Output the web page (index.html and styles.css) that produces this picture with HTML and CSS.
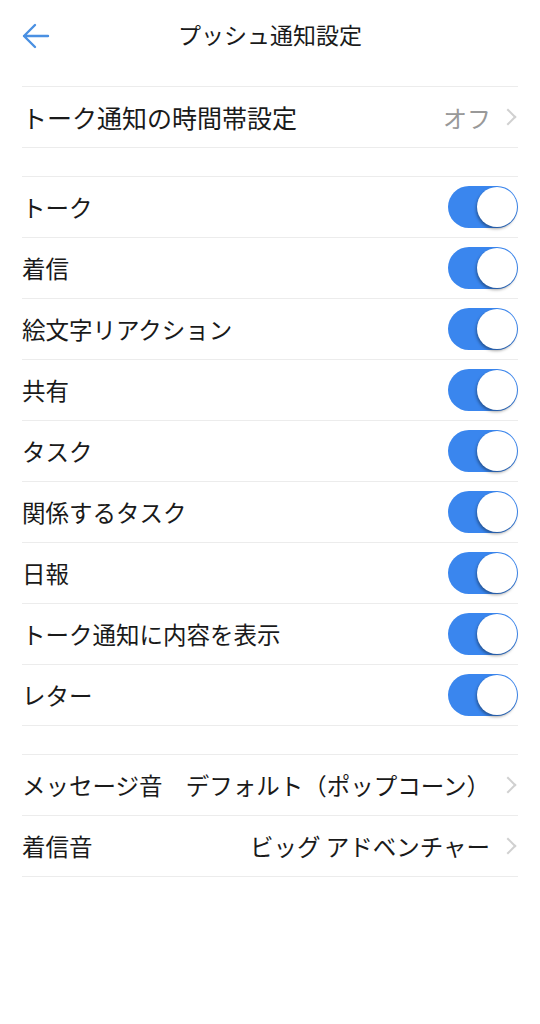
FILE: index.html
```html
<!DOCTYPE html>
<html lang="ja">
<head>
  <meta charset="utf-8">
  <meta name="viewport" content="width=device-width, initial-scale=1.0">
  <title>プッシュ通知設定</title>
  <link rel="stylesheet" href="styles.css">
</head>
<body>

  <header class="nav">
    <a class="back" href="#" aria-label="戻る">
      <svg width="28" height="26" viewBox="0 0 28 26" fill="none" stroke="#4a90e2" stroke-width="2.4" stroke-linecap="round" stroke-linejoin="round">
        <path d="M26 13H2M13 2L2 13L13 24"/>
      </svg>
    </a>
    <h1>プッシュ通知設定</h1>
  </header>

  <main class="settings">

    <!-- 時間帯 -->
    <ul class="group">
      <li class="row big">
        <span class="label">トーク通知の時間帯設定</span>
        <span class="value">オフ</span>
        <span class="chev"></span>
      </li>
    </ul>

    <!-- 通知の種類 -->
    <ul class="group">
      <li class="row"><span class="label">トーク</span><span class="toggle on"></span></li>
      <li class="row"><span class="label">着信</span><span class="toggle on"></span></li>
      <li class="row"><span class="label">絵文字リアクション</span><span class="toggle on"></span></li>
      <li class="row"><span class="label">共有</span><span class="toggle on"></span></li>
      <li class="row"><span class="label">タスク</span><span class="toggle on"></span></li>
      <li class="row"><span class="label">関係するタスク</span><span class="toggle on"></span></li>
      <li class="row"><span class="label">日報</span><span class="toggle on"></span></li>
      <li class="row"><span class="label">トーク通知に内容を表示</span><span class="toggle on"></span></li>
      <li class="row"><span class="label">レター</span><span class="toggle on"></span></li>
    </ul>

    <!-- サウンド -->
    <ul class="group">
      <li class="row">
        <span class="label">メッセージ音</span>
        <span class="value dark">デフォルト（ポップコーン）</span>
        <span class="chev"></span>
      </li>
      <li class="row">
        <span class="label">着信音</span>
        <span class="value dark">ビッグ アドベンチャー</span>
        <span class="chev"></span>
      </li>
    </ul>

  </main>

</body>
</html>
```

FILE: styles.css
```css
body { margin: 0; background: #fff; color: #1a1a1a; font-family: "Noto Sans CJK JP", "Noto Sans", sans-serif; }
.nav { position: relative; height: 86px; display: flex; align-items: center; justify-content: center; }
.nav h1 { margin: 0 0 19px; font-size: 23px; font-weight: 400; }
.back { position: absolute; left: 22px; top: 23px; display: block; line-height: 0; }
.settings { padding: 0 22px; }
.group { list-style: none; margin: 0 0 28px; padding: 0; border-top: 1px solid #ececec; }
.row { display: flex; align-items: center; height: 60px; border-bottom: 1px solid #ececec; font-size: 23.5px; }
.row.big { font-size: 25px; }
.label { flex: 1; white-space: nowrap; }
.value { color: #999; margin-right: 12px; }
.row.big .value { font-size: 24px; margin-right: 11px; }
.value.dark { color: #1a1a1a; }
.chev { width: 10px; height: 10px; border-top: 2px solid #d0d0d0; border-right: 2px solid #d0d0d0; transform: rotate(45deg); margin: 0 4px 0 0; }
.toggle { position: relative; width: 70px; height: 42px; border-radius: 21px; background: #3a86ee; }
.toggle::after { content: ""; position: absolute; top: 1px; right: 1px; width: 40px; height: 40px; border-radius: 50%; background: #fff; box-shadow: -1px 2px 3px rgba(0, 0, 0, 0.35); }
```
